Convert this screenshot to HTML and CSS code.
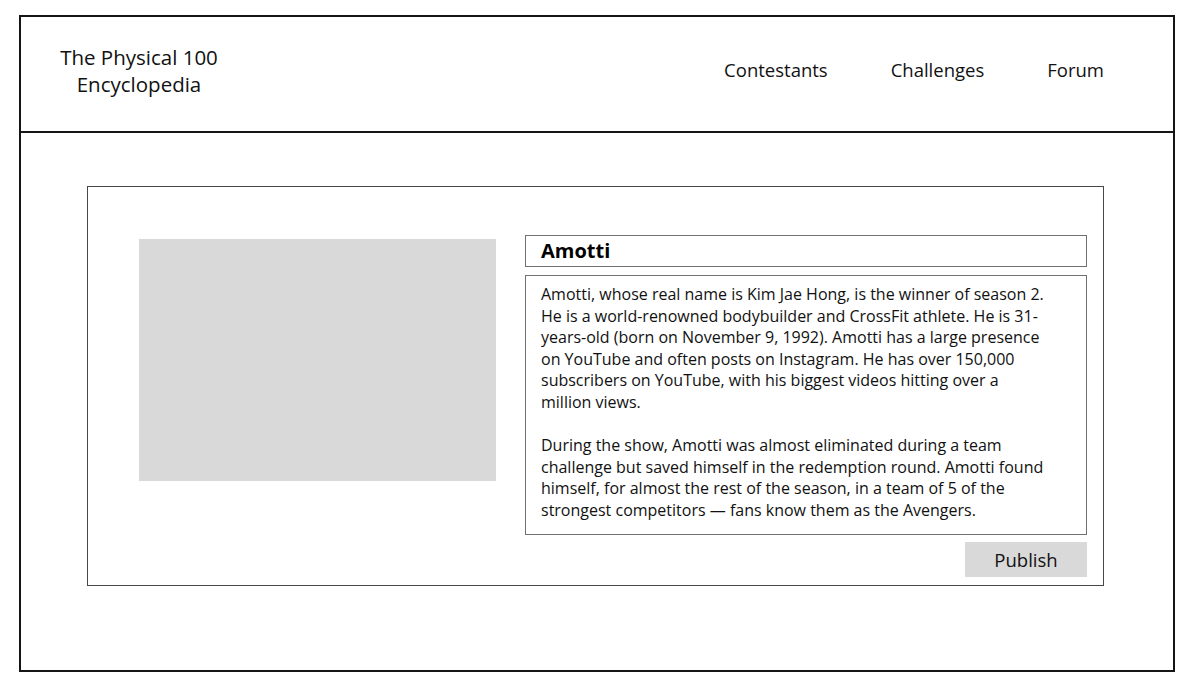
FILE: index.html
```html
<!DOCTYPE html>
<html lang="en">
<head>
<meta charset="utf-8">
<title>The Physical 100 Encyclopedia</title>
<link rel="stylesheet" href="styles.css">
</head>
<body>
<div class="frame">
  <header class="header">
    <div class="title">The Physical 100<br>Encyclopedia</div>
    <nav class="nav">
      <a href="#">Contestants</a>
      <a href="#">Challenges</a>
      <a href="#">Forum</a>
    </nav>
  </header>
  <main class="card">
    <div class="photo"></div>
    <div class="details">
      <div class="name">Amotti</div>
      <div class="desc">
        <p>Amotti, whose real name is Kim Jae Hong, is the winner of season 2. He is a world-renowned bodybuilder and CrossFit athlete. He is 31-years-old (born on November 9, 1992). Amotti has a large presence on YouTube and often posts on Instagram. He has over 150,000 subscribers on YouTube, with his biggest videos hitting over a million views.</p>
        <p>During the show, Amotti was almost eliminated during a team challenge but saved himself in the redemption round. Amotti found himself, for almost the rest of the season, in a team of 5 of the strongest competitors — fans know them as the Avengers.</p>
      </div>
      <button class="publish">Publish</button>
    </div>
  </main>
</div>
</body>
</html>
```
FILE: styles.css
```css
* { box-sizing: border-box; }
html, body { margin: 0; padding: 0; background: #fff; }
body {
  font-family: "Open Sans", "Noto Sans", "Liberation Sans", sans-serif;
  color: #111;
}
.frame {
  margin: 15px 0 0 19px;
  width: 1156px;
  height: 657px;
  border: 2px solid #151515;
}
.header {
  height: 116px;
  border-bottom: 2px solid #151515;
  display: flex;
  align-items: center;
  justify-content: space-between;
  padding: 0 69px 6px 18px;
}
.title {
  width: 200px;
  text-align: center;
  font-size: 20.5px;
  line-height: 27px;
}
.nav {
  display: flex;
  gap: 63px;
  margin-bottom: 4px;
}
.nav a {
  color: #111;
  text-decoration: none;
  font-size: 18.5px;
}
.card {
  margin: 53px 0 0 66px;
  width: 1017px;
  height: 400px;
  border: 1px solid #474747;
  display: grid;
  grid-template-columns: 357px 1fr;
  column-gap: 29px;
  align-items: start;
  padding: 48px 16px 7px 51px;
}
.photo {
  margin-top: 4px;
  height: 242px;
  background: #d9d9d9;
}
.details {
  display: flex;
  flex-direction: column;
}
.name {
  height: 32px;
  border: 1.5px solid #707070;
  padding: 0 15px;
  font-weight: 700;
  font-size: 20px;
  line-height: 30px;
  color: #000;
}
.desc {
  margin-top: 8px;
  height: 260px;
  border: 1.5px solid #707070;
  padding: 8px 38px 0 15px;
  font-size: 16px;
  line-height: 21.6px;
}
.desc p { margin: 0 0 21.6px 0; }
.publish {
  margin-top: 7px;
  align-self: flex-end;
  width: 122px;
  height: 35px;
  border: none;
  background: #d9d9d9;
  font-family: inherit;
  font-size: 18.5px;
  color: #111;
  padding: 0;
}
```
